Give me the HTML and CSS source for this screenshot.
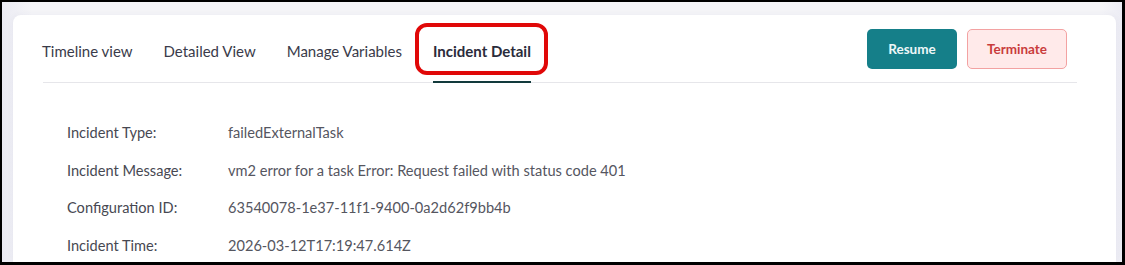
FILE: index.html
```html
<!DOCTYPE html>
<html lang="en">
<head>
    <meta charset="UTF-8">
    <meta name="viewport" content="width=device-width, initial-scale=1.0">
    <title>Incident Detail</title>
    <link rel="stylesheet" href="styles.css">
</head>
<body>
    <div class="frame">
        <div class="card">
            <!-- Onglets et actions -->
            <div class="tabs-bar">
                <nav class="tabs">
                    <a href="#" class="tab">Timeline view</a>
                    <a href="#" class="tab">Detailed View</a>
                    <a href="#" class="tab">Manage Variables</a>
                    <a href="#" class="tab tab-active">Incident Detail</a>
                </nav>
                <div class="actions">
                    <button class="btn btn-resume">Resume</button>
                    <button class="btn btn-terminate">Terminate</button>
                </div>
            </div>

            <!-- Détails de l'incident -->
            <dl class="details">
                <dt>Incident Type:</dt>
                <dd>failedExternalTask</dd>
                <dt>Incident Message:</dt>
                <dd>vm2 error for a task Error: Request failed with status code 401</dd>
                <dt>Configuration ID:</dt>
                <dd>63540078-1e37-11f1-9400-0a2d62f9bb4b</dd>
                <dt>Incident Time:</dt>
                <dd>2026-03-12T17:19:47.614Z</dd>
            </dl>
        </div>
    </div>
</body>
</html>
```

FILE: styles.css
```css
/* Page */
body {
    margin: 0;
    padding: 0;
    font-family: Lato, "Noto Sans", sans-serif;
}

/* Cadre noir autour de la capture */
.frame {
    box-sizing: border-box;
    height: 265px;
    border: solid #000;
    border-width: 2px 3px 3px 2px;
    background: linear-gradient(to right, #ebebf3 0, #f5f5f8 30px, #f5f5f8 calc(100% - 20px), #ececf4 100%);
    padding: 13px 6px 0 11px;
    overflow: hidden;
}

/* Carte principale */
.card {
    background: #fff;
    border-radius: 8px 8px 0 0;
    box-shadow: 0 0 6px rgba(60, 60, 120, 0.06);
    padding: 0 39px 0 30px;
    height: 100%;
}

/* Barre d'onglets */
.tabs-bar {
    display: flex;
    justify-content: space-between;
    align-items: stretch;
    padding-top: 14px;
    border-bottom: 1px solid #e6e6ea;
}

.tabs {
    display: flex;
    gap: 31px;
    margin-left: -1px;
}

.tab {
    position: relative;
    display: flex;
    align-items: center;
    padding-bottom: 8px;
    font-size: 15px;
    color: #3a3b4a;
    text-decoration: none;
    border-bottom: 2px solid transparent;
    margin-bottom: -1px;
}

.tab-active {
    font-weight: 700;
    color: #2a2c3b;
    border-bottom-color: #123a3c;
}

/* Encadré rouge d'annotation */
.tab-active::after {
    content: '';
    position: absolute;
    left: -18px;
    right: -17px;
    top: -6px;
    bottom: 6px;
    border: 4px solid #e00808;
    border-radius: 12px;
}

/* Boutons */
.actions {
    display: flex;
    gap: 10px;
    padding-bottom: 13px;
    margin-right: 10px;
}

.btn {
    height: 40px;
    font-family: Lato, "Noto Sans", sans-serif;
    font-size: 13.5px;
    font-weight: 700;
    border-radius: 5px;
    cursor: pointer;
}

.btn-resume {
    width: 90px;
    background-color: #157f89;
    color: #eef7f8;
    border: none;
}

.btn-terminate {
    width: 100px;
    background-color: #ffeaea;
    color: #c93c3c;
    border: 1px solid #f3a2a2;
}

/* Liste des détails */
.details {
    display: grid;
    grid-template-columns: 161px 1fr;
    row-gap: 17.5px;
    margin: 40px 0 0 24px;
    font-size: 14.6px;
    line-height: 20px;
}

.details dt {
    color: #474852;
}

.details dd {
    margin: 0;
    color: #55565f;
}
```
